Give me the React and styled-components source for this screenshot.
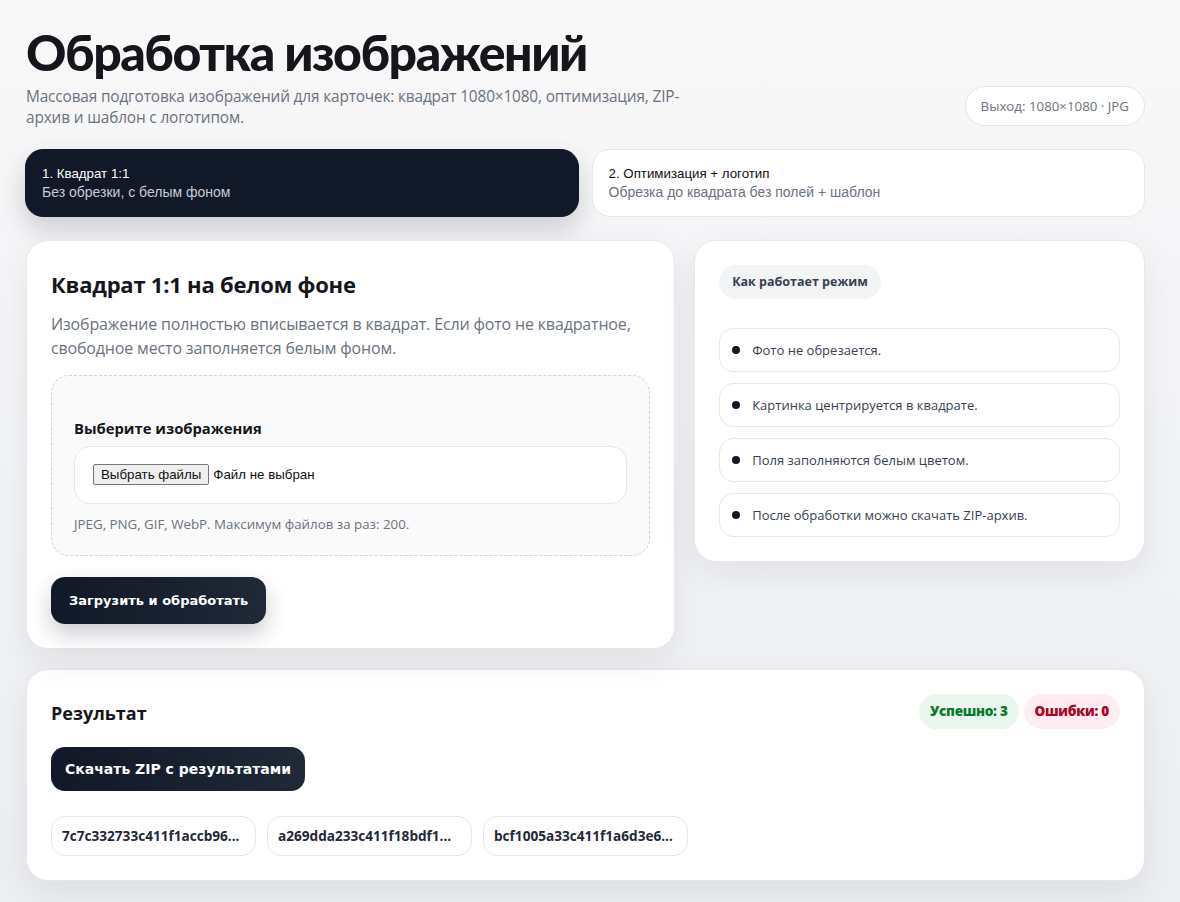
import React from 'react';
import styled, { createGlobalStyle } from 'styled-components';

const GlobalStyle = createGlobalStyle`
  * {
    box-sizing: border-box;
  }

  body {
    margin: 0;
    min-height: 100vh;
    font-family: "Open Sans", "Noto Sans", sans-serif;
    color: #111827;
    background: linear-gradient(180deg, #f8f8f9 0%, #f1f2f4 60%, #eceef1 100%);
  }
`;

const Page = styled.main`
  width: 1119px;
  margin-left: 26px;
  padding: 24px 0 23px;
`;

const Header = styled.header`
  display: flex;
  justify-content: space-between;
  align-items: flex-end;
`;

const Title = styled.h1`
  margin: 0;
  font-family: Lato, "Open Sans", sans-serif;
  font-size: 50px;
  font-weight: 900;
  line-height: 1.15;
  letter-spacing: -0.03em;
  color: #15161c;
`;

const Subtitle = styled.p`
  margin: 4px 0 0;
  width: 662px;
  font-size: 15.4px;
  line-height: 21px;
  color: #6b7280;
  letter-spacing: -0.01em;
`;

const OutputBadge = styled.div`
  margin-bottom: 2px;
  padding: 0 15px;
  height: 40px;
  display: flex;
  align-items: center;
  border: 1px solid #e3e5e9;
  border-radius: 20px;
  background: #fff;
  font-size: 13.3px;
  color: #6b7280;
`;

const Tabs = styled.nav`
  margin-top: 21px;
  margin-left: -1px;
  display: grid;
  grid-template-columns: 1fr 1fr;
  gap: 13px;
`;

const Tab = styled.button`
  height: 68px;
  padding: 0 16px;
  display: flex;
  flex-direction: column;
  justify-content: center;
  gap: 3px;
  text-align: left;
  border-radius: 18px;
  font-family: "Liberation Sans", Arial, sans-serif;
  cursor: pointer;
  border: 1px solid ${(p) => (p.$active ? '#111827' : '#e5e7eb')};
  background: ${(p) => (p.$active ? '#111827' : '#fff')};
  box-shadow: ${(p) =>
    p.$active ? '0 12px 26px rgba(17, 24, 39, 0.18)' : 'none'};
`;

const TabTitle = styled.span`
  font-size: 13.3px;
  color: ${(p) => (p.$active ? '#fff' : '#111')};
`;

const TabHint = styled.span`
  font-size: 14px;
  color: ${(p) => (p.$active ? '#c7ccd6' : '#6b7280')};
`;

const Columns = styled.section`
  margin-top: 23px;
  display: grid;
  grid-template-columns: 1.44fr 1fr;
  gap: 19px;
  align-items: start;
`;

const Card = styled.div`
  background: #fff;
  border: 1px solid #e6e8ec;
  border-radius: 22px;
  padding: 24px;
  box-shadow: 0 12px 34px rgba(15, 23, 42, 0.07);
`;

const CardTitle = styled.h2`
  margin: 4px 0 0;
  font-size: 22px;
  font-weight: 700;
  letter-spacing: -0.01em;
  color: #15161c;
`;

const Lead = styled.p`
  margin: 13px 0 0;
  font-size: 16px;
  line-height: 24px;
  color: #6b7280;
  letter-spacing: -0.01em;
`;

const DropZone = styled.div`
  margin-top: 15px;
  padding: 42px 22px 22px;
  border: 1px dashed #cfd3da;
  border-radius: 18px;
  background: #fafafa;
`;

const FieldLabel = styled.div`
  font-size: 14.8px;
  font-weight: 700;
  color: #15161c;
`;

const FileBox = styled.label`
  margin-top: 8px;
  height: 58px;
  padding: 0 18px;
  display: flex;
  align-items: center;
  gap: 4px;
  border: 1px solid #e5e7eb;
  border-radius: 16px;
  background: #fff;
  font-family: "Liberation Sans", Arial, sans-serif;
  font-size: 13.3px;
  color: #111;
  cursor: pointer;

  input {
    display: none;
  }
`;

const FileButton = styled.span`
  padding: 1px 7px;
  height: 21px;
  display: inline-flex;
  align-items: center;
  border: 1px solid #767676;
  border-radius: 2px;
  background: #efefef;
`;

const Hint = styled.div`
  margin-top: 11px;
  font-size: 13.3px;
  color: #6b7280;
`;

const DarkButton = styled.button`
  height: ${(p) => p.$height || 47}px;
  padding: 0 ${(p) => p.$pad || 18}px;
  border: none;
  border-radius: 14px;
  background: linear-gradient(90deg, #111827 0%, #1f2937 100%);
  color: #fff;
  font-family: "DejaVu Sans", Verdana, sans-serif;
  font-size: ${(p) => p.$size || 13}px;
  font-weight: 700;
  cursor: pointer;
  box-shadow: ${(p) => (p.$flat ? 'none' : '0 10px 22px rgba(17, 24, 39, 0.22)')};
`;

const SubmitRow = styled.div`
  margin-top: 21px;
`;

const ModePill = styled.div`
  display: inline-flex;
  align-items: center;
  height: 34px;
  padding: 0 13px;
  border-radius: 17px;
  background: #f3f4f6;
  font-size: 12.5px;
  font-weight: 700;
  color: #374151;
`;

const StepList = styled.ul`
  list-style: none;
  margin: 29px 0 0;
  padding: 0;
  display: flex;
  flex-direction: column;
  gap: 11px;
`;

const Step = styled.li`
  height: 44px;
  padding: 0 12px;
  display: flex;
  align-items: center;
  gap: 12px;
  border: 1px solid #e5e7eb;
  border-radius: 14px;
  font-size: 13px;
  color: #374151;

  &::before {
    content: '';
    width: 8px;
    height: 8px;
    border-radius: 50%;
    background: #111827;
    flex: none;
  }
`;

const ResultCard = styled(Card)`
  margin-top: 20px;
  padding-bottom: 24px;
`;

const ResultHead = styled.div`
  display: flex;
  justify-content: space-between;
  align-items: center;
`;

const ResultTitle = styled.h3`
  margin: 4px 0 0;
  font-size: 18px;
  font-weight: 700;
  color: #15161c;
`;

const Counters = styled.div`
  display: flex;
  gap: 5px;
`;

const Counter = styled.span`
  height: 35px;
  padding: 0 11px;
  display: inline-flex;
  align-items: center;
  border-radius: 18px;
  font-size: 13.5px;
  font-weight: 800;
  letter-spacing: -0.02em;
  color: ${(p) => (p.$tone === 'ok' ? '#0b7a2c' : '#b0001e')};
  background: ${(p) => (p.$tone === 'ok' ? '#e9f7ee' : '#ffeef1')};
`;

const DownloadRow = styled.div`
  margin-top: 18px;
`;

const Files = styled.div`
  margin-top: 25px;
  display: flex;
  gap: 11px;
`;

const FileChip = styled.div`
  width: 205px;
  height: 40px;
  padding: 0 10px;
  display: flex;
  align-items: center;
  border: 1px solid #e5e7eb;
  border-radius: 14px;
  font-size: 13.6px;
  font-weight: 700;
  color: #1f2937;
  white-space: nowrap;
  overflow: hidden;
`;

const steps = [
  'Фото не обрезается.',
  'Картинка центрируется в квадрате.',
  'Поля заполняются белым цветом.',
  'После обработки можно скачать ZIP-архив.',
];

const files = [
  '7c7c332733c411f1accb96...',
  'a269dda233c411f18bdf1...',
  'bcf1005a33c411f1a6d3e6...',
];

export default function App() {
  return (
    <>
      <GlobalStyle />
      <Page>
        <Header>
          <div>
            <Title>Обработка изображений</Title>
            <Subtitle>
              Массовая подготовка изображений для карточек: квадрат 1080×1080,
              оптимизация, ZIP-архив и шаблон с логотипом.
            </Subtitle>
          </div>
          <OutputBadge>Выход: 1080×1080 · JPG</OutputBadge>
        </Header>

        <Tabs>
          <Tab $active>
            <TabTitle $active>1. Квадрат 1:1</TabTitle>
            <TabHint $active>Без обрезки, с белым фоном</TabHint>
          </Tab>
          <Tab>
            <TabTitle>2. Оптимизация + логотип</TabTitle>
            <TabHint>Обрезка до квадрата без полей + шаблон</TabHint>
          </Tab>
        </Tabs>

        <Columns>
          <Card>
            <CardTitle>Квадрат 1:1 на белом фоне</CardTitle>
            <Lead>
              Изображение полностью вписывается в квадрат. Если фото не
              квадратное, свободное место заполняется белым фоном.
            </Lead>
            <DropZone>
              <FieldLabel>Выберите изображения</FieldLabel>
              <FileBox>
                <input type="file" multiple accept="image/*" />
                <FileButton>Выбрать файлы</FileButton>
                <span>Файл не выбран</span>
              </FileBox>
              <Hint>JPEG, PNG, GIF, WebP. Максимум файлов за раз: 200.</Hint>
            </DropZone>
            <SubmitRow>
              <DarkButton>Загрузить и обработать</DarkButton>
            </SubmitRow>
          </Card>

          <Card>
            <ModePill>Как работает режим</ModePill>
            <StepList>
              {steps.map((s) => (
                <Step key={s}>{s}</Step>
              ))}
            </StepList>
          </Card>
        </Columns>

        <ResultCard>
          <ResultHead>
            <ResultTitle>Результат</ResultTitle>
            <Counters>
              <Counter $tone="ok">Успешно: 3</Counter>
              <Counter $tone="err">Ошибки: 0</Counter>
            </Counters>
          </ResultHead>
          <DownloadRow>
            <DarkButton $height={44} $pad={14} $size={14} $flat>
              Скачать ZIP с результатами
            </DarkButton>
          </DownloadRow>
          <Files>
            {files.map((f) => (
              <FileChip key={f}>{f}</FileChip>
            ))}
          </Files>
        </ResultCard>
      </Page>
    </>
  );
}
